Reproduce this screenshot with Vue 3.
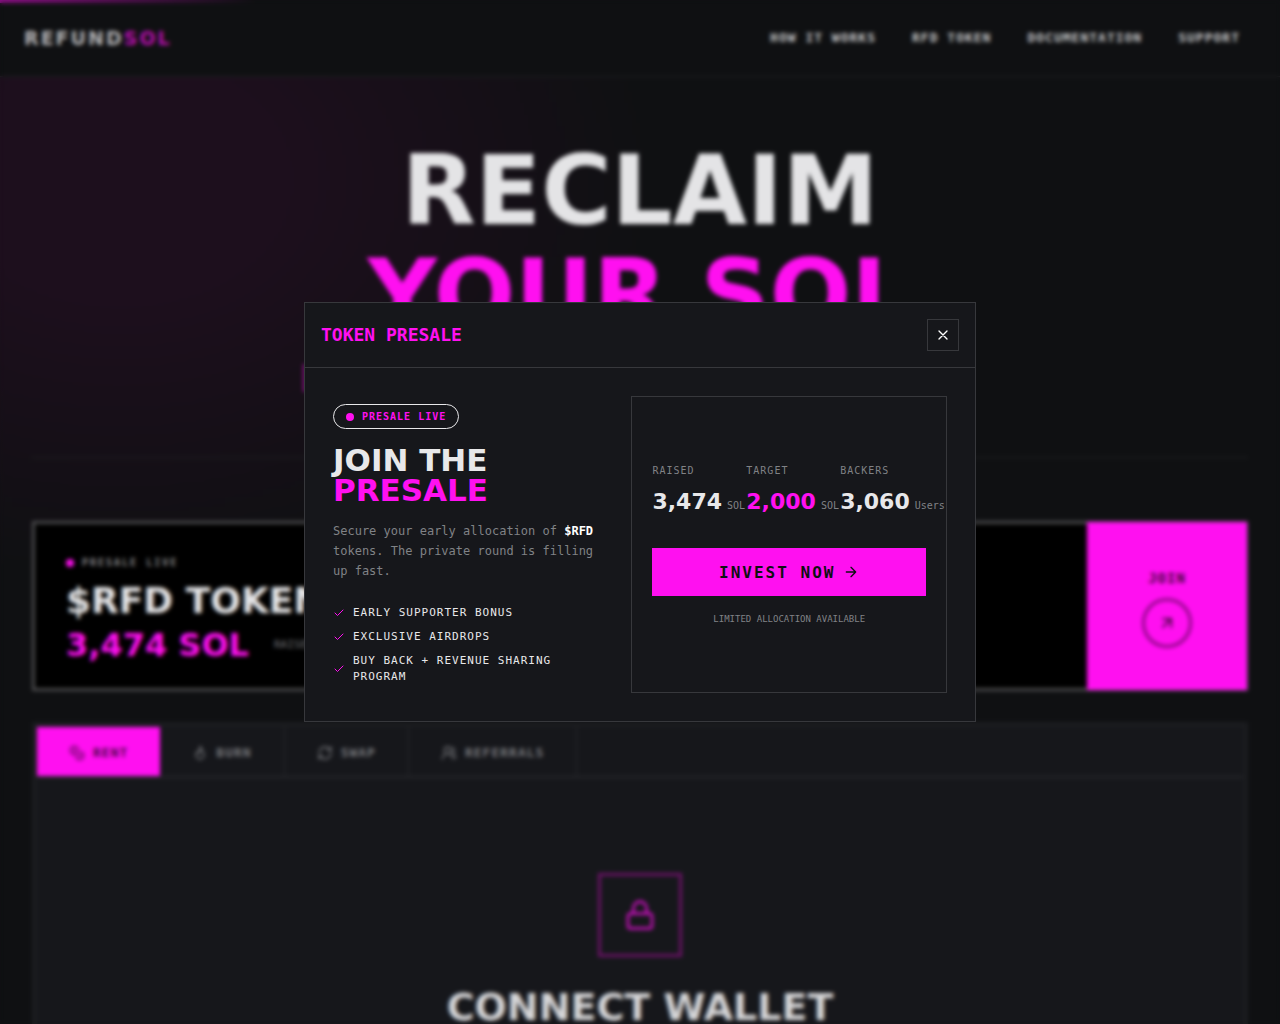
<script setup>
const links = ['How it works', 'RFD token', 'Documentation', 'Support']
const tabs = [
  { name: 'Rent', icon: 'coins' },
  { name: 'Burn', icon: 'flame' },
  { name: 'Swap', icon: 'swap' },
  { name: 'Referrals', icon: 'users' },
]
const perks = ['Early supporter bonus', 'Exclusive airdrops', 'Buy back + revenue sharing program']
const stats = [
  { label: 'Raised', value: '3,474', unit: 'SOL' },
  { label: 'Target', value: '2,000', unit: 'SOL', hot: true },
  { label: 'Backers', value: '3,060', unit: 'Users' },
]
</script>

<template>
  <div class="page">
    <div class="progress"></div>
    <header class="top">
      <a class="logo" href="#">REFUND<span>SOL</span></a>
      <nav>
        <a v-for="l in links" :key="l" href="#">{{ l }}</a>
      </nav>
    </header>

    <main>
      <section class="hero">
        <h1>RECLAIM<br /><span>YOUR SOL</span></h1>
        <div class="tagline"></div>
      </section>

      <section class="banner">
        <div class="banner-info">
          <p class="live"><i class="dot"></i>PRESALE LIVE</p>
          <h2>$RFD TOKEN</h2>
          <p class="sum"><strong>3,474 SOL</strong><small>RAISED</small></p>
        </div>
        <button class="join" type="button">
          JOIN
          <span class="ring">
            <svg width="20" height="20" viewBox="0 0 24 24"><path d="M7 7h10v10M7 17 17 7" /></svg>
          </span>
        </button>
      </section>

      <section class="app">
        <div class="tabs">
          <button v-for="(t, i) in tabs" :key="t.name" type="button" :class="{ active: i === 0 }">
            <svg width="16" height="16" viewBox="0 0 24 24">
              <template v-if="t.icon === 'coins'">
                <circle cx="8" cy="8" r="6" />
                <path d="M18.1 10.4A6 6 0 1 1 10.3 18M7 6h1v4M16.7 13.9l.7.7-2.8 2.8" />
              </template>
              <path v-else-if="t.icon === 'flame'" d="M12 2c1 3 6 7 6 13a6 6 0 0 1-12 0c0-3 2-5 3-6 0 2 1 3 2 3 2-2 1-6 1-10z" />
              <path v-else-if="t.icon === 'swap'" d="M3 12a9 9 0 0 1 9-9 9.7 9.7 0 0 1 6.7 2.7L21 8M21 3v5h-5M21 12a9 9 0 0 1-9 9 9.7 9.7 0 0 1-6.7-2.7L3 16M8 16H3v5" />
              <template v-else>
                <circle cx="10" cy="8" r="5" />
                <path d="M2 21a8 8 0 0 1 16 0M22 20c0-3.4-2-6.5-4-8a5 5 0 0 0-.4-8.3" />
              </template>
            </svg>
            {{ t.name }}
          </button>
        </div>
        <div class="panel">
          <div class="lock">
            <svg width="32" height="32" viewBox="0 0 24 24">
              <rect x="3" y="11" width="18" height="11" rx="2" />
              <path d="M7 11V7a5 5 0 0 1 10 0v4" />
            </svg>
          </div>
          <h2>CONNECT WALLET</h2>
        </div>
      </section>
    </main>
  </div>

  <div class="overlay">
    <div class="modal" role="dialog" aria-modal="true" aria-labelledby="modal-title">
      <div class="modal-head">
        <h2 id="modal-title">TOKEN PRESALE</h2>
        <button class="close" type="button" aria-label="Close">
          <svg width="16" height="16" viewBox="0 0 24 24"><path d="M18 6 6 18M6 6l12 12" /></svg>
        </button>
      </div>
      <div class="modal-body">
        <div class="pitch">
          <span class="pill"><i class="dot"></i>PRESALE LIVE</span>
          <h3>JOIN THE<br /><span>PRESALE</span></h3>
          <p>Secure your early allocation of <b>$RFD</b> tokens. The private round is filling up fast.</p>
          <ul>
            <li v-for="p in perks" :key="p">
              <svg width="12" height="12" viewBox="0 0 24 24"><path d="M20 6 9 17l-5-5" /></svg>
              <span>{{ p }}</span>
            </li>
          </ul>
        </div>
        <div class="card">
          <dl>
            <div v-for="s in stats" :key="s.label">
              <dt>{{ s.label }}</dt>
              <dd :class="{ hot: s.hot }">{{ s.value }}<small>{{ s.unit }}</small></dd>
            </div>
          </dl>
          <button class="invest" type="button">
            INVEST NOW
            <svg width="16" height="16" viewBox="0 0 24 24"><path d="M5 12h14M12 5l7 7-7 7" /></svg>
          </button>
          <p class="note">LIMITED ALLOCATION AVAILABLE</p>
        </div>
      </div>
    </div>
  </div>
</template>

<style>
body {
  background: #0f1012;
}
</style>

<style scoped>
* {
  box-sizing: border-box;
  margin: 0;
  padding: 0;
}
.page {
  --pink: #ff10f0;
  position: relative;
  height: 100vh;
  overflow: hidden;
  background: radial-gradient(ellipse 540px 400px at 120px 180px, #1d0f1d 30%, #0f1012 100%);
  color: #e4e4e6;
  font-family: "DejaVu Sans Mono", "Liberation Mono", monospace;
}
a {
  color: inherit;
  text-decoration: none;
}
button {
  font-family: inherit;
  border: 0;
  cursor: pointer;
}
svg {
  fill: none;
  stroke: currentColor;
  stroke-width: 2;
  stroke-linecap: round;
  stroke-linejoin: round;
  flex: none;
}
.progress {
  position: absolute;
  top: 0;
  left: 0;
  width: 20%;
  height: 3px;
  background: linear-gradient(90deg, #8a0f84, transparent);
}
.top {
  display: flex;
  align-items: center;
  justify-content: space-between;
  height: 77px;
  padding: 0 40px 0 24px;
  background: #0f1012;
  border-bottom: 1px solid #202124;
}
.logo {
  font: bold 19px "DejaVu Sans", sans-serif;
  letter-spacing: 2px;
  color: #b4b4b6;
}
.logo span {
  color: #b80fae;
}
nav {
  display: flex;
  gap: 36px;
  font-size: 13px;
  line-height: 20px;
  font-weight: bold;
  letter-spacing: 1px;
  text-transform: uppercase;
  color: #c8c8ca;
}
main {
  padding: 0 32px;
}
.hero {
  height: 381px;
  padding-top: 62px;
  border-bottom: 1px solid #202124;
  text-align: center;
}
h1 {
  font: bold 96px/104px "DejaVu Sans", sans-serif;
}
h1 span {
  color: var(--pink);
}
.tagline {
  width: 674px;
  max-width: 100%;
  height: 28px;
  margin: 17px auto 0;
  border-left: 3px solid #8a0f84;
}
.banner {
  display: flex;
  justify-content: space-between;
  height: 170px;
  margin-top: 63px;
  background: #000;
  border: 3px solid #4a4a4c;
}
.banner-info {
  padding: 31px;
}
.live {
  display: flex;
  align-items: center;
  gap: 8px;
  font-size: 10px;
  line-height: 16px;
  font-weight: bold;
  letter-spacing: 2px;
  color: #8c8c8e;
}
.dot {
  width: 8px;
  height: 8px;
  border-radius: 50%;
  background: #ff10f0;
}
.banner h2 {
  margin-top: 8px;
  font: bold 36px/44px "DejaVu Sans", sans-serif;
}
.sum {
  display: flex;
  align-items: center;
  gap: 12px;
  margin-top: 4px;
  line-height: 36px;
  color: #77787c;
}
.sum strong {
  min-width: 196px;
  font: bold 32px/36px "DejaVu Sans", sans-serif;
  color: var(--pink);
}
.sum small {
  font-size: 11px;
}
.join {
  display: flex;
  flex-direction: column;
  align-items: center;
  justify-content: center;
  gap: 10px;
  width: 160px;
  margin: -2px;
  padding-top: 4px;
  background: var(--pink);
  color: #3a0636;
  font-size: 14px;
  line-height: 20px;
  font-weight: bold;
  letter-spacing: 1px;
}
.ring {
  display: grid;
  place-items: center;
  width: 50px;
  height: 50px;
  border: 3px solid #8f0887;
  border-radius: 50%;
}
.app {
  margin-top: 31px;
  border: 5px solid #1b1c1f;
  background: #16171b;
}
.tabs {
  display: flex;
  border-bottom: 2px solid #26272b;
}
.tabs button {
  display: flex;
  align-items: center;
  gap: 8px;
  height: 49px;
  padding: 2px 32px 0;
  border-right: 1px solid #26272b;
  background: none;
  color: #77787c;
  font-size: 13px;
  font-weight: bold;
  letter-spacing: 1px;
  text-transform: uppercase;
}
.tabs .active {
  border-right: 0;
  background: var(--pink);
  color: #4a0746;
}
.panel {
  display: flex;
  flex-direction: column;
  align-items: center;
  gap: 28px;
  padding: 95px 32px;
}
.lock {
  display: grid;
  place-items: center;
  width: 84px;
  height: 84px;
  border: 3px solid #6a1266;
  color: #c510ba;
}
.panel h2 {
  font: bold 38px/44px "DejaVu Sans", sans-serif;
  color: #d4d4d6;
}

.overlay {
  --pink: #ff10f0;
  --line: #37383c;
  position: fixed;
  inset: 0;
  display: grid;
  place-items: center;
  padding: 16px;
  backdrop-filter: blur(2px);
  color: #e8e8ea;
  font-family: "DejaVu Sans Mono", "Liberation Mono", monospace;
}
.modal {
  width: 100%;
  max-width: 672px;
  background: #16171b;
  border: 1px solid var(--line);
}
.modal-head {
  display: flex;
  align-items: center;
  justify-content: space-between;
  padding: 16px;
  border-bottom: 1px solid var(--line);
}
.modal-head h2 {
  font-size: 18px;
  line-height: 24px;
  color: var(--pink);
}
.close {
  display: grid;
  place-items: center;
  width: 32px;
  height: 32px;
  background: none;
  border: 1px solid var(--line);
  color: #fff;
}
.modal-body {
  display: grid;
  grid-template-columns: 6fr 7fr;
  gap: 28px;
  min-height: 353px;
  padding: 28px;
}
.pitch {
  display: flex;
  flex-direction: column;
  align-items: flex-start;
  justify-content: center;
}
.pill {
  display: flex;
  align-items: center;
  gap: 8px;
  padding: 4px 12px;
  border: 1px solid #e8e8ea;
  border-radius: 20px;
  font-size: 10px;
  line-height: 15px;
  font-weight: bold;
  letter-spacing: 1px;
  color: var(--pink);
}
h3 {
  margin: 16px 0;
  font: bold 31px/30px "DejaVu Sans", sans-serif;
}
h3 span {
  color: var(--pink);
}
.pitch p {
  margin-bottom: 24px;
  font-size: 12px;
  line-height: 20px;
  color: #808286;
}
.pitch b {
  color: #fff;
}
ul {
  display: flex;
  flex-direction: column;
  gap: 8px;
  list-style: none;
}
li {
  display: flex;
  align-items: center;
  gap: 8px;
  font-size: 11px;
  line-height: 16px;
  letter-spacing: 1px;
  text-transform: uppercase;
}
li svg {
  stroke: #ff10f0;
}
.card {
  display: flex;
  flex-direction: column;
  justify-content: center;
  min-width: 0;
  padding: 20px;
  border: 1px solid var(--line);
  overflow: hidden;
}
dl {
  display: grid;
  grid-template-columns: repeat(3, minmax(0, 1fr));
  gap: 8px;
  margin-bottom: 32px;
}
dt {
  margin-bottom: 8px;
  font-size: 10px;
  line-height: 16px;
  letter-spacing: 1px;
  text-transform: uppercase;
  color: #808286;
}
dd {
  font: bold 22px/29px "DejaVu Sans", sans-serif;
  white-space: nowrap;
}
dd.hot {
  color: var(--pink);
}
dd small {
  margin-left: 5px;
  font: 10px "DejaVu Sans Mono", monospace;
  color: #808286;
}
.invest {
  display: flex;
  align-items: center;
  justify-content: center;
  gap: 8px;
  height: 48px;
  background: var(--pink);
  color: #0f1012;
  font-size: 16px;
  font-weight: bold;
  letter-spacing: 2px;
}
.note {
  margin-top: 16px;
  font-size: 9px;
  line-height: 14px;
  text-align: center;
  color: #808286;
}
</style>
